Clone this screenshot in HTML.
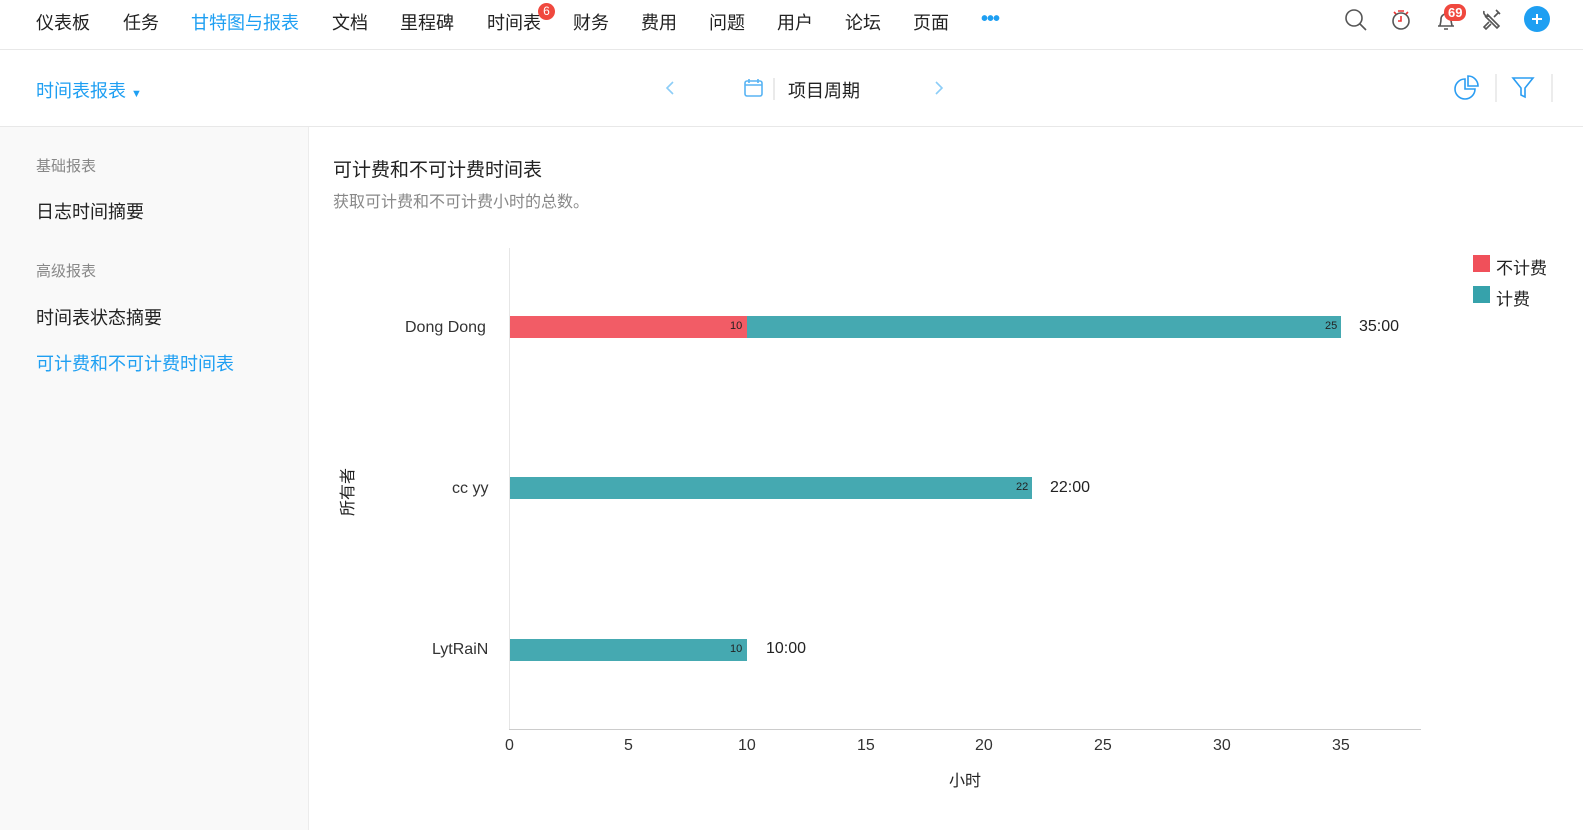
<!DOCTYPE html><html><head><meta charset="utf-8"><style>
*{margin:0;padding:0;box-sizing:border-box}
body{width:1583px;height:830px;overflow:hidden;font-family:"Liberation Sans","Noto Sans CJK SC",sans-serif;background:#fff;color:#222;position:relative}
.a{position:absolute;white-space:nowrap}
.nav span{position:absolute;top:9px;font-size:18px;color:#222}
</style></head><body>
<div class="nav">
<span style="left:36px">仪表板</span><span style="left:123px">任务</span><span style="left:191px;color:#1e9ff2">甘特图与报表</span><span style="left:332px">文档</span><span style="left:400px">里程碑</span><span style="left:487px">时间表</span><span style="left:573px">财务</span><span style="left:641px">费用</span><span style="left:709px">问题</span><span style="left:777px">用户</span><span style="left:845px">论坛</span><span style="left:913px">页面</span>
</div>
<div class="a" style="left:538px;top:3px;width:17px;height:17px;border-radius:50%;background:#f0483e;color:#fff;font-size:12px;text-align:center;line-height:17px">6</div>
<div class="a" style="left:981px;top:8px;color:#1e9ff2;font-size:20px;font-weight:bold;letter-spacing:-1px">•••</div>
<svg class="a" style="left:1340px;top:6px" width="230" height="30" fill="none" stroke="#555" stroke-width="1.6">
<circle cx="14" cy="12" r="8"/><path d="M20 18l6 6"/>
<circle cx="61" cy="15" r="8"/><path d="M58 5h6M56 8l-2-2M66 8l2-2M61 10v5h-3" stroke="#e33"/>
<path d="M98 20h16M100 20c0-2 1-3 1-7a5 5 0 0110 0c0 4 1 5 1 7M104 23h4"/>
<path d="M145 10l12 12l2-2l-12-12M144 5a4 4 0 005 5M159 6l-5 5M149 16l-5 5l2 2l5-5M156 4l4 4"/>
<circle cx="197" cy="13" r="13" fill="#1e9ff2" stroke="none"/><path d="M197 8v10M192 13h10" stroke="#fff" stroke-width="2"/>
</svg>
<div class="a" style="left:1444px;top:4px;height:17px;padding:0 4px;border-radius:8px;background:#f0483e;color:#fff;font-size:13px;line-height:17px;font-weight:bold">69</div>
<div class="a" style="left:0;top:49px;width:1583px;height:1px;background:#e8e8e8"></div>
<div class="a" style="left:36px;top:77px;font-size:18px;color:#1e9ff2">时间表报表 <span style="font-size:11px">▼</span></div>
<svg class="a" style="left:660px;top:76px" width="290" height="26" fill="none" stroke="#8ccdf7" stroke-width="1.6">
<path d="M13 6l-6 6 6 6"/><path d="M276 6l6 6-6 6"/>
<rect x="85" y="5" width="17" height="15" rx="2" stroke="#58b4f4"/><path d="M85 9h17M89 3v4M98 3v4" stroke="#58b4f4"/>
<path d="M114 2v22" stroke="#e5e5e5"/>
</svg>
<div class="a" style="left:788px;top:77px;font-size:18px;color:#222">项目周期</div>
<svg class="a" style="left:1450px;top:72px" width="110" height="32" fill="none" stroke="#2b9df2" stroke-width="1.6">
<path d="M15 7a10 10 0 1010 10H15z"/><path d="M18 4a10 10 0 0110 10H18z"/>
<path d="M46 2v28" stroke="#e8e8e8"/>
<path d="M63 6h20l-8 10v9l-4-2v-7z"/>
<path d="M102 2v28" stroke="#e8e8e8"/>
</svg>
<div class="a" style="left:0;top:126px;width:1583px;height:1px;background:#e8e8e8"></div>
<div class="a" style="left:0;top:127px;width:309px;height:703px;background:#f9f9f9;border-right:1px solid #ececec"></div>
<div class="a" style="left:36px;top:155px;font-size:15px;color:#888">基础报表</div>
<div class="a" style="left:36px;top:198px;font-size:18px">日志时间摘要</div>
<div class="a" style="left:36px;top:260px;font-size:15px;color:#888">高级报表</div>
<div class="a" style="left:36px;top:304px;font-size:18px">时间表状态摘要</div>
<div class="a" style="left:36px;top:350px;font-size:18px;color:#1e9ff2">可计费和不可计费时间表</div>
<div class="a" style="left:333px;top:155px;font-size:19px">可计费和不可计费时间表</div>
<div class="a" style="left:333px;top:188px;font-size:16px;color:#888">获取可计费和不可计费小时的总数。</div>
<div class="a" style="left:509px;top:248px;width:1px;height:482px;background:#e6e6e6"></div>
<div class="a" style="left:509px;top:729px;width:912px;height:1px;background:#ccc"></div>
<div class="a" style="left:510px;top:316px;width:237px;height:22px;background:#f25c66"></div>
<div class="a" style="left:747px;top:316px;width:594px;height:22px;background:#45a9b1"></div>
<div class="a" style="left:510px;top:477px;width:522px;height:22px;background:#45a9b1"></div>
<div class="a" style="left:510px;top:639px;width:237px;height:22px;background:#45a9b1"></div>
<div class="a" style="left:730px;top:320px;font-size:11px">10</div>
<div class="a" style="left:1325px;top:320px;font-size:11px">25</div>
<div class="a" style="left:1016px;top:481px;font-size:11px">22</div>
<div class="a" style="left:730px;top:643px;font-size:11px">10</div>
<div class="a" style="left:1359px;top:318px;font-size:16px">35:00</div>
<div class="a" style="left:1050px;top:479px;font-size:16px">22:00</div>
<div class="a" style="left:766px;top:640px;font-size:16px">10:00</div>
<div class="a" style="left:405px;top:319px;font-size:16px;color:#333">Dong Dong</div>
<div class="a" style="left:452px;top:480px;font-size:16px;color:#333">cc yy</div>
<div class="a" style="left:432px;top:641px;font-size:16px;color:#333">LytRaiN</div>
<div class="a" style="left:322px;top:480px;font-size:16px;transform:rotate(-90deg)">所有者</div>
<div class="a" style="left:505px;top:737px;font-size:16px;color:#333">0</div>
<div class="a" style="left:624px;top:737px;font-size:16px;color:#333">5</div>
<div class="a" style="left:738px;top:737px;font-size:16px;color:#333">10</div>
<div class="a" style="left:857px;top:737px;font-size:16px;color:#333">15</div>
<div class="a" style="left:975px;top:737px;font-size:16px;color:#333">20</div>
<div class="a" style="left:1094px;top:737px;font-size:16px;color:#333">25</div>
<div class="a" style="left:1213px;top:737px;font-size:16px;color:#333">30</div>
<div class="a" style="left:1332px;top:737px;font-size:16px;color:#333">35</div>
<div class="a" style="left:949px;top:767px;font-size:16px">小时</div>
<div class="a" style="left:1473px;top:255px;width:17px;height:17px;background:#f0505a"></div>
<div class="a" style="left:1496px;top:254px;font-size:17px">不计费</div>
<div class="a" style="left:1473px;top:286px;width:17px;height:17px;background:#36a2ab"></div>
<div class="a" style="left:1496px;top:285px;font-size:17px">计费</div>
</body></html>
